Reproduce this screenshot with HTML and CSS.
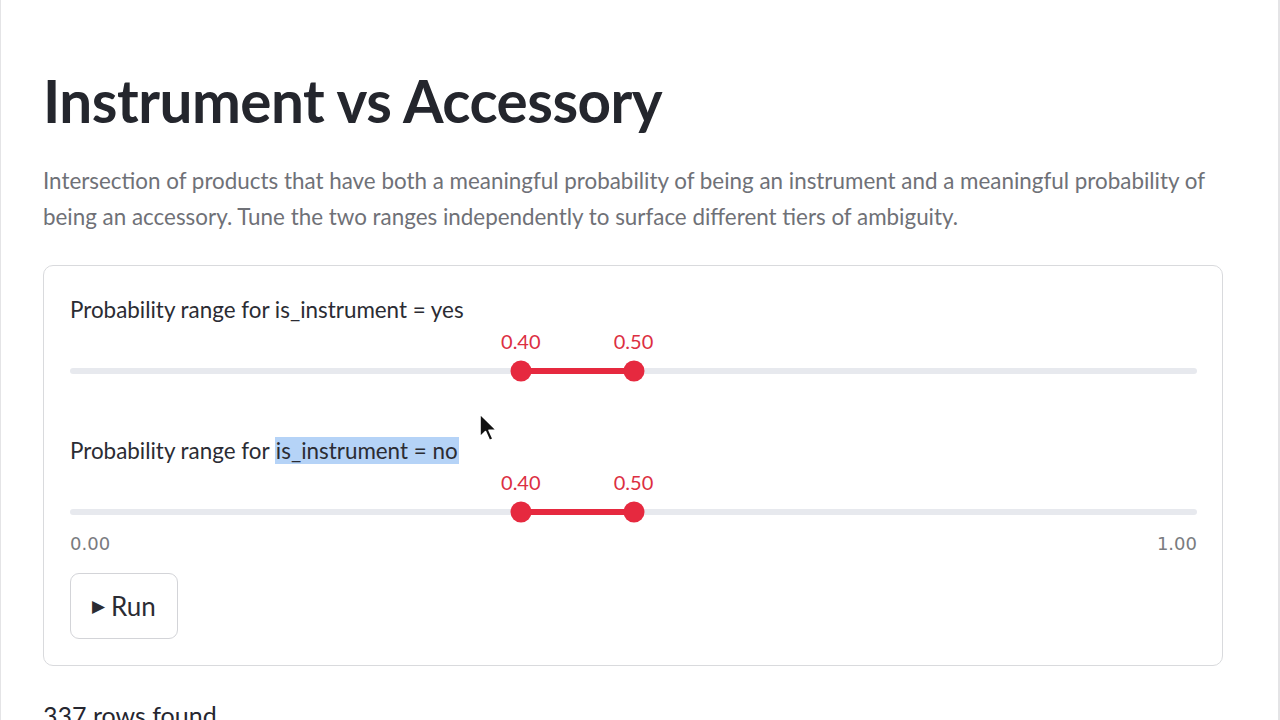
FILE: index.html
```html
<!DOCTYPE html>
<html lang="en">
<head>
<meta charset="utf-8">
<title>Instrument vs Accessory</title>
<link rel="stylesheet" href="styles.css">
</head>
<body>
<div class="frame">
  <main class="main">
    <h1 class="title">Instrument vs Accessory</h1>
    <p class="intro">Intersection of products that have both a meaningful probability of being an instrument and a meaningful probability of being an accessory. Tune the two ranges independently to surface different tiers of ambiguity.</p>

    <section class="card">
      <div class="slider">
        <div class="slider-label">Probability range for is_instrument = yes</div>
        <div class="values">
          <span class="val" style="left:40%">0.40</span>
          <span class="val" style="left:50%">0.50</span>
        </div>
        <div class="track-wrap">
          <div class="track">
            <div class="range" style="left:40%;width:10%"></div>
            <span class="thumb" style="left:40%"></span>
            <span class="thumb" style="left:50%"></span>
          </div>
        </div>
      </div>

      <div class="slider second">
        <div class="slider-label">Probability range for <span class="sel">is_instrument = no</span></div>
        <div class="values">
          <span class="val" style="left:40%">0.40</span>
          <span class="val" style="left:50%">0.50</span>
        </div>
        <div class="track-wrap">
          <div class="track">
            <div class="range" style="left:40%;width:10%"></div>
            <span class="thumb" style="left:40%"></span>
            <span class="thumb" style="left:50%"></span>
          </div>
        </div>
        <div class="minmax"><span>0.00</span><span>1.00</span></div>
      </div>

      <button class="run"><span class="tri">&#9654;</span>Run</button>
    </section>

    <p class="rows">337 rows found</p>
  </main>
  <svg class="cursor" width="22" height="32" viewBox="0 0 22 32" aria-hidden="true">
    <path d="M2 2 L2 25 L7.5 19.5 L11.5 28.5 L15 27 L11 18.2 L18.5 18.2 Z" fill="#111" stroke="#fff" stroke-width="1.6" stroke-linejoin="round"/>
  </svg>
</div>
</body>
</html>
```

FILE: styles.css
```css
html, body {
  margin: 0;
  padding: 0;
  background: #ffffff;
}
body {
  font-family: Lato, "Noto Sans", "Liberation Sans", sans-serif;
  color: #262730;
  width: 1280px;
  height: 720px;
  overflow: hidden;
}
.frame {
  position: relative;
  height: 720px;
  border-left: 1px solid #e4e4e6;
  border-right: 2px solid #e4e4e6;
  box-sizing: border-box;
}
.main {
  padding: 58px 55px 0 42px;
}
.title {
  margin: 0;
  font-size: 58.4px;
  line-height: 84px;
  font-weight: 700;
  color: #24262d;
  letter-spacing: -0.5px;
}
.intro {
  margin: 21px 0 0 0;
  font-size: 22.4px;
  line-height: 36px;
  color: #6f7177;
}
.card {
  margin-top: 30px;
  border: 1.5px solid #d9dadd;
  border-radius: 10px;
  padding: 29px 25px 26px 26px;
}
.slider-label {
  font-size: 22.4px;
  line-height: 30px;
  color: #2b2c33;
}
.sel {
  background: #b5d3f7;
  padding: 0 1px;
}
.values {
  position: relative;
  height: 31px;
}
.val {
  position: absolute;
  top: 1px;
  transform: translateX(-50%);
  font-size: 20px;
  line-height: 30px;
  color: #dc2f42;
}
.track-wrap {
  height: 30px;
  display: flex;
  align-items: center;
}
.track {
  position: relative;
  width: 100%;
  height: 6px;
  border-radius: 3px;
  background: #e7e9ee;
}
.range {
  position: absolute;
  top: 0;
  height: 6px;
  background: #e6293f;
}
.thumb {
  position: absolute;
  top: 50%;
  width: 21px;
  height: 21px;
  border-radius: 50%;
  background: #e6293f;
  transform: translate(-50%, -50%);
}
.second {
  margin-top: 50px;
}
.minmax {
  margin-top: 2px;
  display: flex;
  justify-content: space-between;
  font-family: "DejaVu Sans", Verdana, sans-serif;
  font-size: 18px;
  line-height: 30px;
  color: #7a7b80;
}
.run {
  margin-top: 14px;
  display: flex;
  align-items: center;
  gap: 6px;
  height: 66px;
  padding: 0 21px 0 21px;
  background: #ffffff;
  border: 1.5px solid #d3d4d8;
  border-radius: 9px;
  font-family: Lato, "Noto Sans", sans-serif;
  font-size: 26px;
  color: #2b2c33;
}
.tri {
  font-size: 17px;
  font-family: "DejaVu Sans", sans-serif;
}
.rows {
  margin: 34px 0 0 0;
  font-size: 25px;
  line-height: 30px;
  color: #262730;
}
.cursor {
  position: absolute;
  left: 477px;
  top: 412px;
}
```
